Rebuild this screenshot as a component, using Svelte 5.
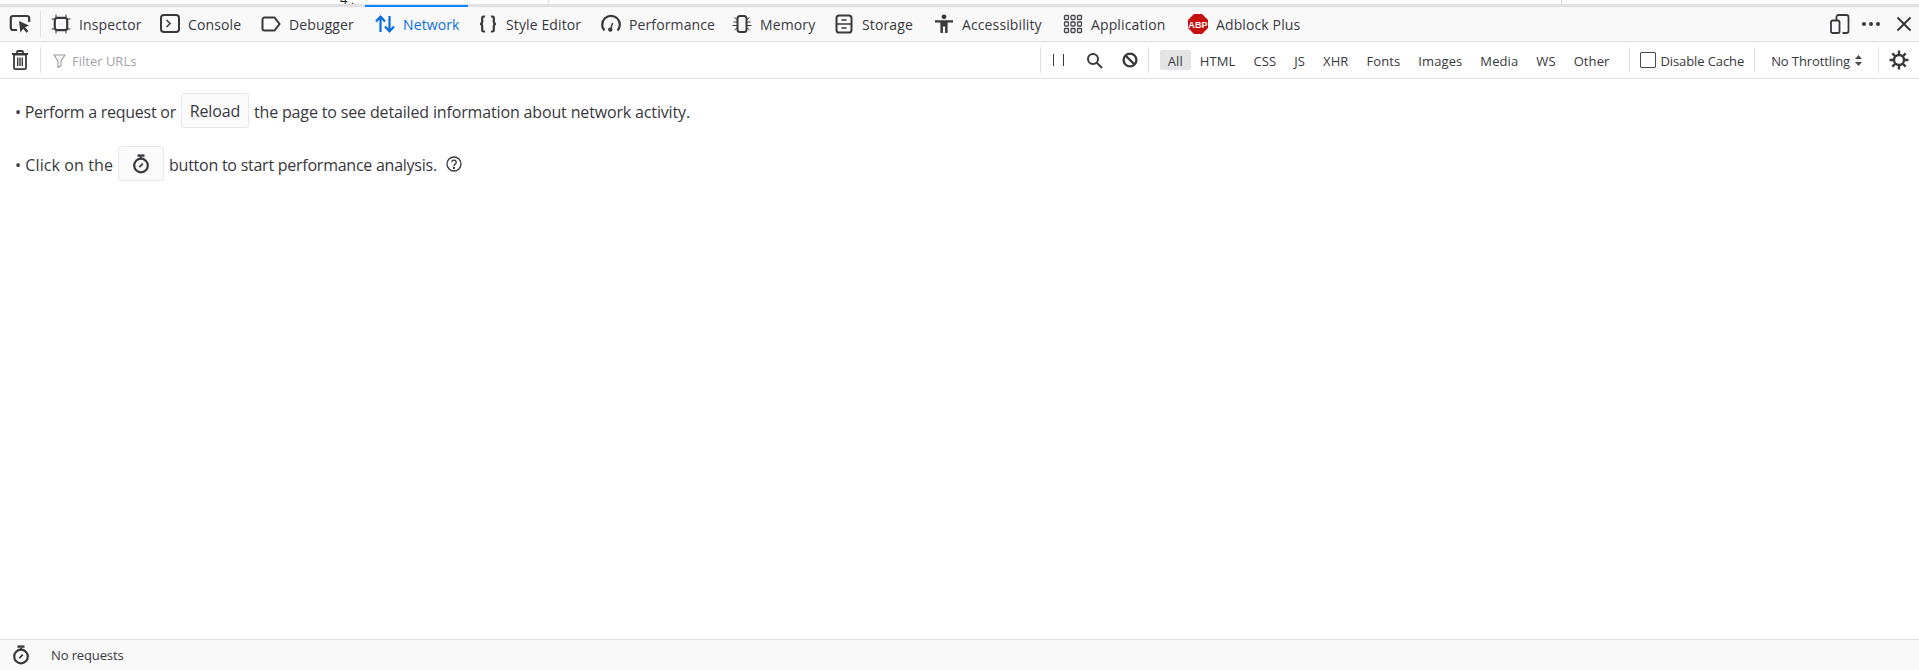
<script lang="ts">
  // w is the label's width, the Open Sans text runs narrower than the original
  const tabs = [
    { id: "inspector", label: "Inspector", w: 61 },
    { id: "console", label: "Console", w: 53 },
    { id: "debugger", label: "Debugger", w: 66 },
    { id: "network", label: "Network", w: 55 },
    { id: "style", label: "Style Editor", w: 75 },
    { id: "performance", label: "Performance", w: 83 },
    { id: "memory", label: "Memory", w: 54 },
    { id: "storage", label: "Storage", w: 52 },
    { id: "accessibility", label: "Accessibility", w: 81 },
    { id: "application", label: "Application", w: 77 },
    { id: "abp", label: "Adblock Plus", w: 85 },
  ];
  const filters = ["All", "HTML", "CSS", "JS", "XHR", "Fonts", "Images", "Media", "WS", "Other"];
</script>

{#snippet watch(size: number)}
  <svg width={size} height={size} viewBox="0 0 20 20" fill="none" stroke="#38383d" stroke-width="2.2">
    <circle cx="10" cy="11.5" r="6.8" />
    <path d="M6.5 1.6h7" stroke-width="2.4" />
    <path d="M10 3v2" />
    <path d="M8.4 13.2l3.4-3.6" stroke-width="1.8" />
  </svg>
{/snippet}

<div class="page">
  <div class="strip">
    <div class="peek"><span class="frag">4 ,</span><i class="v a"></i><i class="v b"></i></div>
    <div class="band"></div>
  </div>

  <div class="tabbar">
    <button class="pick" aria-label="Pick an element">
      <svg width="22" height="20" viewBox="0 0 22 20" fill="none">
        <path d="M8 16H4a2.2 2.2 0 0 1-2.2-2.2V4.2A2.2 2.2 0 0 1 4 2h14a2.2 2.2 0 0 1 2.2 2.2V8" stroke="#38383d" stroke-width="2.2" />
        <path d="M10 7l10 4.6-4 1.6 3.4 3.8-1.9 1.7-3.3-3.9-2.8 3.6z" fill="#38383d" />
      </svg>
    </button>
    <i class="sep"></i>
    {#each tabs as t}
      <div class="tab" class:on={t.id === "network"}>
        <span class="ico">
          {#if t.id === "inspector"}
            <svg width="20" height="20" viewBox="0 0 20 20" fill="none" stroke="#38383d" stroke-width="2.2">
              <rect x="3.8" y="3.8" width="12.4" height="12.4" rx="2.4" />
              <path d="M5 0.5v3M15 0.5v3M5 16.5v3M15 16.5v3M0.5 5h3M0.5 15h3M16.5 5h3M16.5 15h3" stroke-width="1" />
            </svg>
          {:else if t.id === "console"}
            <svg width="20" height="20" viewBox="0 0 20 20" fill="none" stroke="#38383d" stroke-width="2">
              <rect x="1" y="1" width="18" height="17" rx="3" />
              <path d="M6.5 6l3.6 3.5-3.6 3.5" stroke-width="1.5" />
            </svg>
          {:else if t.id === "debugger"}
            <svg width="20" height="20" viewBox="0 0 20 20" fill="none" stroke="#38383d" stroke-width="2">
              <path d="M3.5 3.5h10l5 6.5-5 6.5h-10a2 2 0 0 1-2-2v-9a2 2 0 0 1 2-2z" />
            </svg>
          {:else if t.id === "network"}
            <svg width="20" height="20" viewBox="0 0 20 20" fill="none" stroke="#0a6ee0" stroke-width="2.2">
              <path d="M5.5 18V3M1 7.5l4.5-4.8L10 7.5M14.5 2v15M10 12.5l4.5 4.8 4.5-4.8" />
            </svg>
          {:else if t.id === "style"}
            <svg width="20" height="20" viewBox="0 0 20 20" fill="none" stroke="#38383d" stroke-width="2.2">
              <path d="M7 2.5H5.6a1.4 1.4 0 0 0-1.4 1.4v3.6c0 1.4-.8 2.5-2.2 2.5 1.4 0 2.2 1.1 2.2 2.5v3.6a1.4 1.4 0 0 0 1.4 1.4H7" />
              <path d="M13 2.5h1.4a1.4 1.4 0 0 1 1.4 1.4v3.6c0 1.4.8 2.5 2.2 2.5-1.4 0-2.2 1.1-2.2 2.5v3.6a1.4 1.4 0 0 1-1.4 1.4H13" />
            </svg>
          {:else if t.id === "performance"}
            <svg width="20" height="20" viewBox="0 0 20 20" fill="none" stroke="#38383d" stroke-width="2.2">
              <path d="M3.4 16.5A8.8 8.8 0 1 1 16.6 16.5" />
              <path d="M9.5 15l2.2-6" stroke-width="1.4" />
              <circle cx="9.3" cy="15.6" r="2.2" fill="#38383d" stroke="none" />
            </svg>
          {:else if t.id === "memory"}
            <svg width="20" height="20" viewBox="0 0 20 20" fill="none" stroke="#38383d" stroke-width="2">
              <rect x="5.5" y="2" width="9" height="16" rx="2.5" />
              <path d="M2.5 3.5l2.5 2M1.5 8h3.5M0.5 11.5h4.5M2.5 16l2.5-2M17.5 3.5L15 5.5M18.5 8H15M19.5 11.5H15M17.5 16L15 14" stroke-width="1" />
            </svg>
          {:else if t.id === "storage"}
            <svg width="20" height="20" viewBox="0 0 20 20" fill="none" stroke="#38383d" stroke-width="2">
              <rect x="2.5" y="1.5" width="15" height="17" rx="2.6" />
              <path d="M2.5 10h15M7.5 6h5M7.5 14h5" stroke-width="1.5" />
            </svg>
          {:else if t.id === "accessibility"}
            <svg width="20" height="20" viewBox="0 0 20 20" fill="#38383d">
              <circle cx="10" cy="2.8" r="2.4" />
              <path d="M1 6.2h18v2.4h-5.4V19h-2.5v-6.5H8.9V19H6.4V8.6H1z" />
            </svg>
          {:else if t.id === "application"}
            <svg width="20" height="20" viewBox="0 0 20 20" fill="none" stroke="#4a4a4f" stroke-width="1.3">
              {#each [1.5, 8, 14.5] as y}
                {#each [1.5, 8, 14.5] as x}
                  <rect {x} {y} width="4" height="4" rx="0.8" />
                {/each}
              {/each}
            </svg>
          {:else}
            <svg width="20" height="20" viewBox="0 0 20 20">
              <path d="M6 0h8l6 6v8l-6 6H6l-6-6V6z" fill="#c70d0d" />
              <text x="10" y="13.5" class="abp">ABP</text>
            </svg>
          {/if}
        </span>
        <span class="lbl" style="width: {t.w}px">{t.label}</span>
      </div>
    {/each}
    <div class="grow"></div>
    <button class="win" aria-label="Dock">
      <svg width="20" height="20" viewBox="0 0 20 20" fill="none" stroke="#38383d" stroke-width="1.8">
        <path d="M6.5 6V3a2 2 0 0 1 2-2h8a2 2 0 0 1 2 2v14a2 2 0 0 1-2 2h-4" />
        <rect x="1" y="6.5" width="8.5" height="12.5" rx="1.6" />
      </svg>
    </button>
    <button class="win" aria-label="More">
      <svg class="dots" width="20" height="20" viewBox="0 0 20 20" fill="#38383d">
        <circle cx="3" cy="10" r="2" /><circle cx="10" cy="10" r="2" /><circle cx="17" cy="10" r="2" />
      </svg>
    </button>
    <button class="win close" aria-label="Close">
      <svg width="16" height="16" viewBox="0 0 16 16" fill="none" stroke="#38383d" stroke-width="2">
        <path d="M1.5 1.5l13 13M14.5 1.5l-13 13" />
      </svg>
    </button>
  </div>

  <div class="toolbar">
    <button class="trash" aria-label="Clear">
      <svg width="18" height="20" viewBox="0 0 18 20" fill="none" stroke="#38383d" stroke-width="1.8">
        <path d="M1 4h16M6 3.5V2a1 1 0 0 1 1-1h4a1 1 0 0 1 1 1v1.5" />
        <path d="M3 4.5v13a1.6 1.6 0 0 0 1.6 1.6h8.8a1.6 1.6 0 0 0 1.6-1.6v-13z" />
        <path d="M6.7 7.5v8.5M9 7.5v8.5M11.3 7.5v8.5" stroke-width="1.4" />
      </svg>
    </button>
    <i class="sep"></i>
    <svg class="funnel" width="13" height="14" viewBox="0 0 13 14" fill="none" stroke="#98989c" stroke-width="1.1">
      <path d="M1 1h11L8 7v5l-3 1.4V7z" />
    </svg>
    <span class="filter">Filter URLs</span>
    <div class="grow"></div>
    <i class="sep"></i>
    <button class="tool pause" aria-label="Pause"><b></b><b></b></button>
    <button class="tool" aria-label="Search">
      <svg width="17" height="17" viewBox="0 0 17 17" fill="none" stroke="#38383d" stroke-width="2">
        <circle cx="7" cy="7" r="5" /><path d="M10.8 10.8L16 16" />
      </svg>
    </button>
    <button class="tool block" aria-label="Block">
      <svg width="16" height="16" viewBox="0 0 16 16" fill="none" stroke="#38383d" stroke-width="2.4">
        <circle cx="8" cy="8" r="6.4" /><path d="M3.5 3.5l9 9" />
      </svg>
    </button>
    <i class="sep"></i>
    <div class="filters">
      {#each filters as f}
        <span class="chip" class:sel={f === "All"}>{f}</span>
      {/each}
    </div>
    <i class="sep"></i>
    <label class="cache"><span class="box"></span><span class="txt">Disable Cache</span></label>
    <i class="sep"></i>
    <span class="throttle"><span class="txt">No Throttling</span>
      <svg width="7" height="11" viewBox="0 0 7 11" fill="#4a4a4f"><path d="M3.5 0L7 4H0zM3.5 11L0 7h7z" /></svg>
    </span>
    <i class="sep"></i>
    <button class="gear" aria-label="Settings">
      <svg width="20" height="20" viewBox="0 0 20 20" fill="none" stroke="#38383d">
        <circle cx="10" cy="10" r="5" stroke-width="2.4" />
        <path d="M10 0.5v4M10 15.5v4M0.5 10h4M15.5 10h4M3.3 3.3l2.8 2.8M13.9 13.9l2.8 2.8M16.7 3.3l-2.8 2.8M6.1 13.9l-2.8 2.8" stroke-width="2.4" />
      </svg>
    </button>
  </div>

  <main class="body">
    <div class="line">
      <span class="copy tight">• Perform a request or</span>
      <span class="btn reload">Reload</span>
      <span class="copy long">the page to see detailed information about network activity.</span>
    </div>
    <div class="line second">
      <span class="copy wide">• Click on the</span>
      <span class="btn stop">{@render watch(20)}</span>
      <span class="copy">button to start performance analysis.</span>
      <svg class="help" width="16" height="16" viewBox="0 0 16 16" fill="none" stroke="#38383d" stroke-width="1.3">
        <circle cx="8" cy="8" r="7" />
        <path d="M5.8 6.2a2.2 2.2 0 1 1 3.4 1.9C8.4 8.6 8 9 8 10" />
        <circle cx="8" cy="12" r="0.5" fill="#38383d" />
      </svg>
    </div>
  </main>

  <footer class="status">
    <span class="sw">{@render watch(20)}</span>
    <span>No requests</span>
  </footer>
</div>

<style>
  :global(body) { margin: 0; background: #fff; }
  .page {
    height: 670px; display: flex; flex-direction: column; overflow: hidden;
    font-family: "Open Sans", "Noto Sans", sans-serif; color: #38383d; background: #fff;
  }
  button { background: none; border: 0; padding: 0; display: flex; align-items: center; justify-content: center; }
  i { display: block; }

  .strip { height: 7px; flex: none; }
  .peek { height: 4px; position: relative; overflow: hidden; background: #fff; }
  .frag { position: absolute; left: 340px; top: -10px; font-size: 13px; color: #222; }
  .v { position: absolute; top: 0; width: 1px; height: 4px; background: #d8d8d8; }
  .v.a { left: 548px; }
  .v.b { left: 1561px; }
  .band { height: 3px; background: #e0e0e2; }

  .tabbar {
    height: 34px; flex: none; display: flex; align-items: center; background: #f9f9fa;
    border-bottom: 1px solid #e0e0e2;
  }
  .pick { width: 40px; height: 34px; }
  .sep { width: 1px; height: 26px; background: #e0e0e2; flex: none; }
  .tab {
    height: 34px; display: flex; align-items: center; gap: 8px; padding: 0 10px; box-sizing: border-box;
    font-size: 14px; position: relative; letter-spacing: 0.12px; white-space: nowrap;
  }
  .ico { width: 20px; height: 20px; display: flex; align-items: center; justify-content: center; flex: none; }
  .on { color: #0a6ee0; }
  .on::before { content: ""; position: absolute; left: 0; right: 0; top: -2px; height: 2px; background: #0a84ff; }
  .abp { font: 700 9px "Liberation Sans", sans-serif; fill: #fff; text-anchor: middle; }
  .grow { flex: 1; }
  .win { width: 33px; height: 34px; }
  .dots { margin-right: 4px; }
  .close { width: 30px; }

  .toolbar {
    height: 36px; flex: none; display: flex; align-items: center; border-bottom: 1px solid #e0e0e2;
    font-size: 13px; letter-spacing: -0.1px;
  }
  .trash { width: 40px; height: 36px; }
  .funnel { margin: 1px 6px 0 12px; }
  .filter { color: #a3a3a6; letter-spacing: 0; padding-top: 2px; }
  .tool { width: 36px; height: 36px; }
  .block { width: 35px; }
  .pause { gap: 9px; }
  .pause b { width: 1px; height: 12px; background: #38383d; display: block; }
  .filters { display: flex; padding: 0 10px 0 11px; letter-spacing: 0.1px; }
  .chip { padding: 0 9px; height: 20px; line-height: 22px; border-radius: 2px; }
  .sel { padding: 0 8px; background: #e4e4e6; }
  .cache { display: flex; align-items: center; gap: 5px; padding: 0 10px; }
  .box { width: 16px; height: 16px; border: 1px solid #4a4a4f; box-sizing: border-box; border-radius: 1px; }
  .txt { padding-top: 2px; }
  .throttle { display: flex; align-items: center; gap: 5px; padding: 0 16px; }
  .gear { width: 40px; height: 36px; }

  .body { flex: 1; padding: 14px 15px 0; font-size: 16px; letter-spacing: -0.14px; }
  .line { height: 35px; margin-bottom: 18px; display: flex; align-items: center; gap: 5px; }
  .copy { padding-top: 2px; }
  .tight { letter-spacing: -0.26px; }
  .long { letter-spacing: -0.15px; }
  .second .copy { letter-spacing: -0.25px; }
  .second .wide { letter-spacing: 0.1px; }
  .btn {
    height: 35px; box-sizing: border-box; border: 1px solid #e7e7e9; border-radius: 3px; background: #fbfbfb;
    display: flex; align-items: center; justify-content: center;
  }
  .reload { width: 68px; }
  .stop { width: 46px; }
  .help { margin-left: 4px; }

  .status {
    height: 31px; flex: none; box-sizing: border-box; border-top: 1px solid #e0e0e2; background: #f9f9fa;
    display: flex; align-items: center; font-size: 13px; letter-spacing: -0.12px;
  }
  .sw { width: 51px; padding-left: 11px; box-sizing: border-box; display: flex; }
</style>
